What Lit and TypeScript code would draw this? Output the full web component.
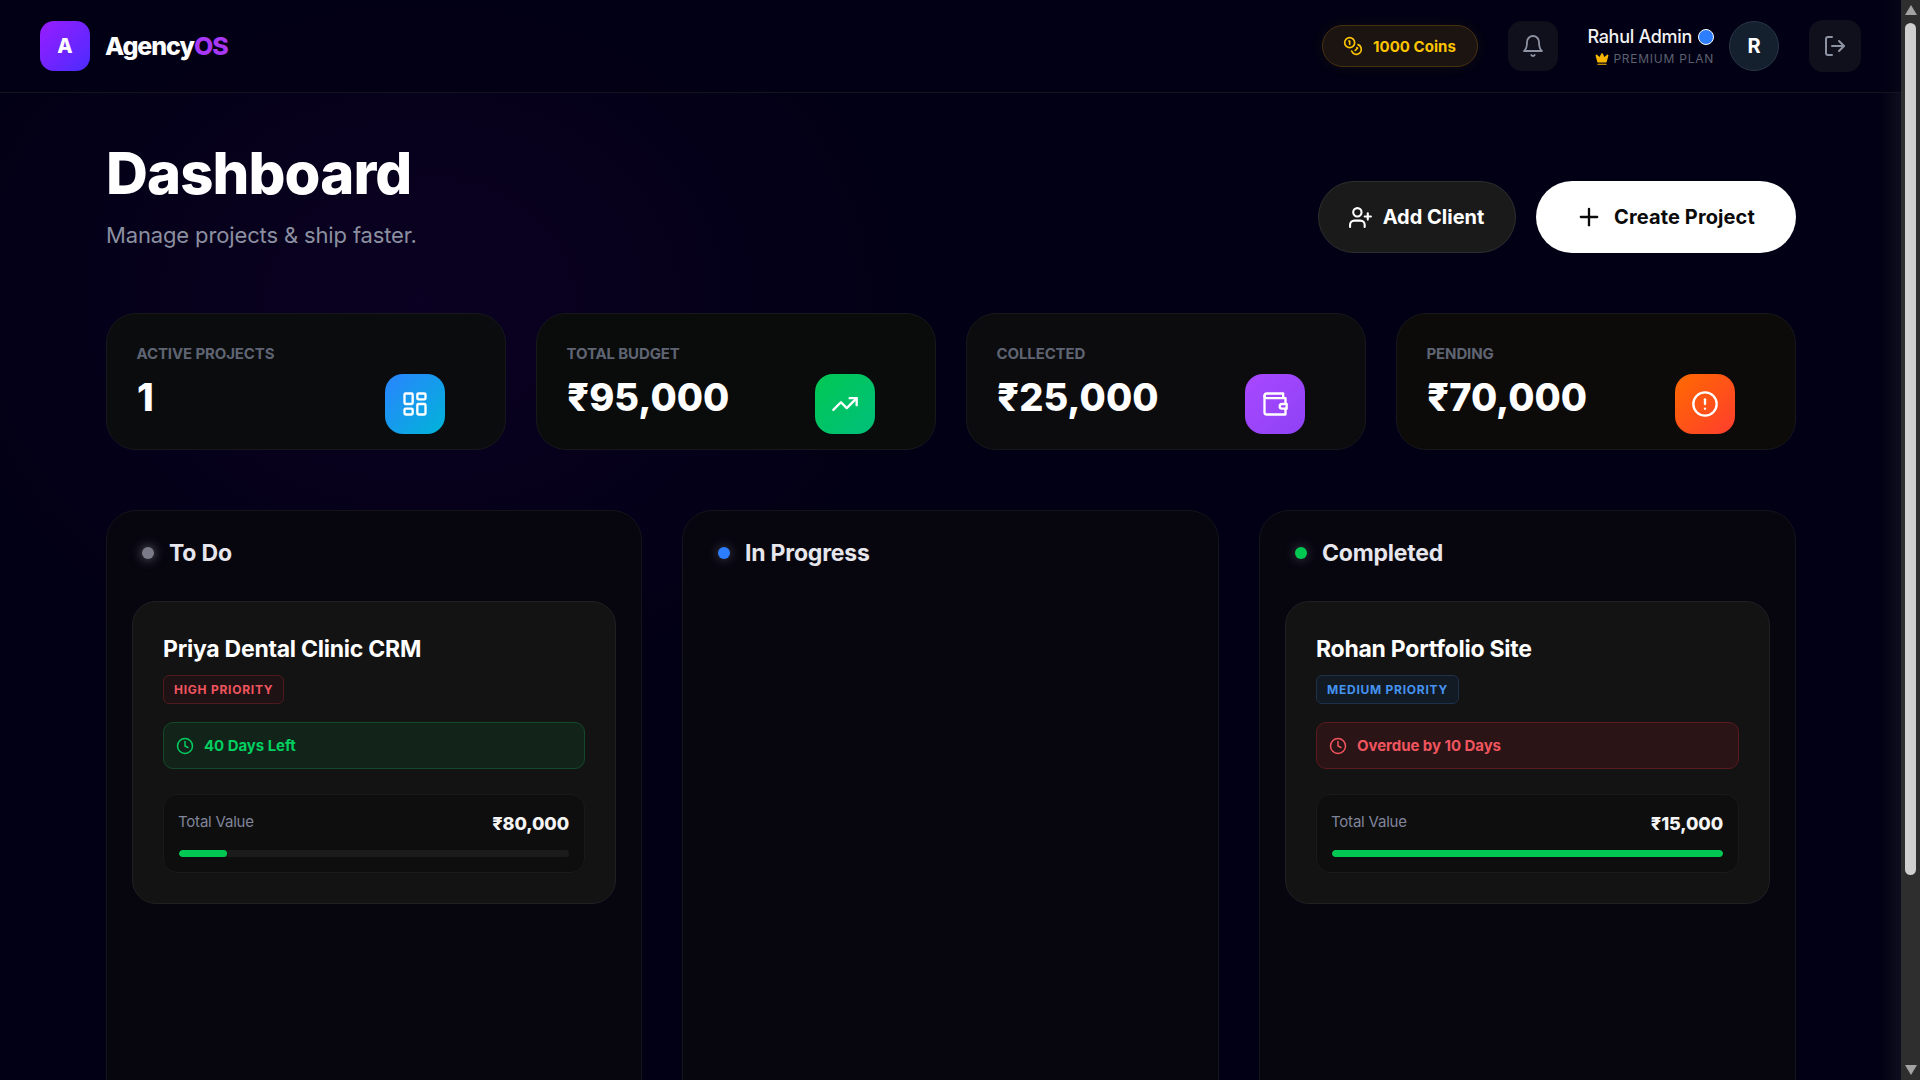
import { LitElement, html, css, svg } from "lit";
import { customElement } from "lit/decorators.js";

const ic = (body: unknown, size = 24, sw = 2) => html`<svg width=${size} height=${size} viewBox="0 0 24 24" fill="none" stroke="currentColor" stroke-width=${sw} stroke-linecap="round" stroke-linejoin="round">${body}</svg>`;
const coins = svg`<circle cx="8" cy="8" r="6"/><path d="M18.09 10.37A6 6 0 1 1 10.34 18"/><path d="M7 6h1v4"/><path d="m16.71 13.88.7.71-2.82 2.82"/>`;
const bell = svg`<path d="M6 8a6 6 0 0 1 12 0c0 7 3 9 3 9H3s3-2 3-9"/><path d="M10.3 21a1.94 1.94 0 0 0 3.4 0"/>`;
const logout = svg`<path d="M9 21H5a2 2 0 0 1-2-2V5a2 2 0 0 1 2-2h4"/><polyline points="16 17 21 12 16 7"/><line x1="21" y1="12" x2="9" y2="12"/>`;
const userPlus = svg`<path d="M16 21v-2a4 4 0 0 0-4-4H6a4 4 0 0 0-4 4v2"/><circle cx="9" cy="7" r="4"/><line x1="19" y1="8" x2="19" y2="14"/><line x1="22" y1="11" x2="16" y2="11"/>`;
const plus = svg`<path d="M5 12h14"/><path d="M12 5v14"/>`;
const dash = svg`<rect x="3" y="3" width="7" height="9" rx="1"/><rect x="14" y="3" width="7" height="5" rx="1"/><rect x="14" y="12" width="7" height="9" rx="1"/><rect x="3" y="16" width="7" height="5" rx="1"/>`;
const trend = svg`<polyline points="22 7 13.5 15.5 8.5 10.5 2 17"/><polyline points="16 7 22 7 22 13"/>`;
const wallet = svg`<path d="M21 12V7H5a2 2 0 0 1 0-4h14v4"/><path d="M3 5v14a2 2 0 0 0 2 2h16v-5"/><path d="M18 12a2 2 0 0 0 0 4h4v-4Z"/>`;
const alert = svg`<circle cx="12" cy="12" r="10"/><line x1="12" y1="8" x2="12" y2="12"/><line x1="12" y1="16" x2="12.01" y2="16"/>`;
const clock = svg`<circle cx="12" cy="12" r="10"/><polyline points="12 6 12 12 16 14"/>`;

const stats = [
  { l: "ACTIVE PROJECTS", v: "1", c: "blue", i: dash, bg: "s1" },
  { l: "TOTAL BUDGET", v: "₹95,000", c: "green", i: trend, bg: "s2" },
  { l: "COLLECTED", v: "₹25,000", c: "purple", i: wallet, bg: "s3" },
  { l: "PENDING", v: "₹70,000", c: "orange", i: alert, bg: "s4" },
];

type P = { t: string; pr: string; prc: string; d: string; dc: string; val: string; pct: number };
const cols: { n: string; dot: string; items: P[] }[] = [
  { n: "To Do", dot: "gray", items: [{ t: "Priya Dental Clinic CRM", pr: "HIGH PRIORITY", prc: "high", d: "40 Days Left", dc: "ok", val: "₹80,000", pct: 12.4 }] },
  { n: "In Progress", dot: "blue", items: [] },
  { n: "Completed", dot: "green", items: [{ t: "Rohan Portfolio Site", pr: "MEDIUM PRIORITY", prc: "med", d: "Overdue by 10 Days", dc: "late", val: "₹15,000", pct: 100 }] },
];

@customElement("app-root")
export class AppRoot extends LitElement {
  static styles = css`
    :host { display: block; height: 1080px; overflow: hidden; font-family: Inter, "Liberation Sans", sans-serif; color: #fff; }
    .page { display: flex; height: 1080px; }
    .main { position: relative; width: 1901px; height: 1080px; overflow: hidden; background:
      radial-gradient(ellipse 520px 420px at 420px 300px, rgba(70,10,130,.13), transparent 100%),
      linear-gradient(90deg, transparent 1880px, rgba(30,30,40,.45) 1901px), #020014; }
    .sb { width: 19px; height: 1080px; background: #2e2e2e; position: relative; display: flex; flex-direction: column; align-items: center; justify-content: space-between; padding: 5px 0; box-sizing: border-box; }
    .sb .thumb { position: absolute; left: 4px; top: 23px; width: 11px; height: 852px; background: #cfcfcf; border-radius: 6px; }
    .arr { width: 0; height: 0; border-left: 6px solid transparent; border-right: 6px solid transparent; }
    .arr.up { border-bottom: 10px solid #a3a3a3; }
    .arr.down { border-top: 10px solid #a3a3a3; }

    header { height: 92px; border-bottom: 1px solid #14141f; display: flex; align-items: center; padding: 0 40px; background: rgba(2,0,20,.6); }
    .logo { width: 50px; height: 50px; border-radius: 14px; background: linear-gradient(135deg,#9a1cff,#4a2cff); display: flex; align-items: center; justify-content: center; font-weight: 800; font-size: 20px; }
    .brand { margin-left: 15px; font-size: 25px; font-weight: 800; letter-spacing: -1.05px; }
    .brand span { color: #a838f5; }
    .sp { flex: 1; }
    .coin { height: 42px; width: 156px; box-sizing: border-box; border-radius: 21px; background: #1b1410; border: 1px solid #47320f; box-shadow: 0 0 14px rgba(255,190,0,.07); color: #fdc400; display: flex; align-items: center; gap: 10px; padding-left: 20px; font-size: 15px; font-weight: 700; letter-spacing: 0.05px; }
    .ibtn { width: 50px; height: 50px; border-radius: 14px; background: #10101d; color: #8e93a3; display: flex; align-items: center; justify-content: center; margin-left: 30px; }
    .user { margin-left: 30px; width: 126px; margin-right: 15px; display: flex; flex-direction: column; align-items: flex-end; }
    .uname { display: flex; align-items: center; gap: 6px; font-size: 18px; font-weight: 500; letter-spacing: -0.3px; height: 24px; color: #f2f2f2; white-space: nowrap; margin-top: 1px; }
    .vdot { width: 16px; height: 16px; box-sizing: border-box; border-radius: 50%; background: #2d7dff; border: 1px solid #fff; }
    .plan { display: flex; align-items: center; gap: 4px; font-size: 12px; color: #5c6070; letter-spacing: .75px; height: 20px; margin-top: 0; white-space: nowrap; }
    .plan svg { color: #f9b500; }
    .avatar { width: 50px; height: 50px; border-radius: 50%; box-sizing: border-box; background: #14202e; border: 1px solid #2a3644; display: flex; align-items: center; justify-content: center; font-size: 20px; font-weight: 700; }
    .logout { width: 52px; height: 52px; border-radius: 14px; background: #10101d; color: #8e93a3; display: flex; align-items: center; justify-content: center; margin-left: 30px; }

    .content { padding: 0 105px 0 106px; }
    .top { height: 220px; display: flex; justify-content: space-between; }
    h1 { margin: 45px 0 0 0; font-size: 58px; line-height: 70px; font-weight: 800; letter-spacing: -0.9px; }
    .sub { font-size: 22px; color: #8b90a0; margin-top: 13px; line-height: 28px; letter-spacing: -0.14px; }
    .actions { display: flex; gap: 20px; padding-top: 88px; }
    .btn { height: 72px; border-radius: 36px; box-sizing: border-box; display: flex; align-items: center; justify-content: center; font-size: 20px; font-weight: 700; letter-spacing: 0; }
    .b1 { width: 198px; gap: 10px; background: #1a1a1a; border: 1px solid #2e2e2e; padding-right: 2px; }
    .b2 { width: 260px; gap: 11px; background: #fff; color: #0a0a0a; letter-spacing: .12px; padding-bottom: 1px; padding-right: 2px; }

    .stats { display: grid; grid-template-columns: repeat(4, 1fr); gap: 30px; }
    .stat { height: 137px; box-sizing: border-box; border: 1px solid #17171c; border-radius: 30px; padding: 30px 60px 14px 30px; display: flex; justify-content: space-between; }
    .s1 { background: #0a0c0e; } .s2 { background: #0a0c0c; } .s3 { background: #0c0c0f; } .s4 { background: #0d0b0a; }
    .lab { font-size: 15px; font-weight: 700; color: #5f6473; line-height: 20px; letter-spacing: -0.12px; margin: 0 0 0 -0.5px; }
    .val { font-size: 38px; font-weight: 800; line-height: 46px; margin-top: 10px; letter-spacing: 0; }
    .sic { width: 60px; height: 60px; border-radius: 18px; display: flex; align-items: center; justify-content: center; margin-top: 30px; }
    .blue { background: linear-gradient(135deg,#2a84ff,#00b4d8); }
    .green { background: linear-gradient(135deg,#00c853,#00bf7a); }
    .purple { background: linear-gradient(135deg,#a848ff,#8f42f5); }
    .orange { background: linear-gradient(135deg,#ff6a00,#ff3d2e); }

    .cols { display: grid; grid-template-columns: 536px 537px 537px; gap: 40px; margin-top: 60px; }
    .col { height: 720px; box-sizing: border-box; border: 1px solid #14141c; border-radius: 30px; background: #07060f; padding: 24px 25px; }
    .ch { display: flex; align-items: center; gap: 15px; height: 36px; margin: 0 0 30px 10px; font-size: 23px; font-weight: 700; letter-spacing: -0.2px; color: #e6e6ec; line-height: 36px; }
    .dot { width: 12px; height: 12px; border-radius: 50%; margin-left: 0; }
    .dot.gray { background: #7a7a88; box-shadow: 0 0 12px rgba(200,200,220,.55); }
    .dot.blue { background: #2d7dff; box-shadow: 0 0 12px rgba(200,200,220,.35); }
    .dot.green { background: #00c853; box-shadow: 0 0 12px rgba(200,200,220,.35); }
    .card { box-sizing: border-box; height: 303px; border: 1px solid #202024; background: #131313; border-radius: 24px; padding: 29px 30px; }
    .ct { font-size: 23px; font-weight: 700; line-height: 36px; letter-spacing: -0.25px; }
    .badge { display: inline-flex; align-items: center; height: 29px; box-sizing: border-box; padding: 0 10px; margin-top: 8px; border-radius: 6px; font-size: 12px; font-weight: 700; letter-spacing: .75px; }
    .high { color: #f0555f; background: #1f1214; border: 1px solid #4f1a1f; }
    .med { color: #4593ef; background: #121a24; border: 1px solid #1e304a; }
    .dl { height: 47px; box-sizing: border-box; border-radius: 10px; margin-top: 18px; display: flex; align-items: center; gap: 10px; padding-left: 12px; font-size: 15px; font-weight: 700; letter-spacing: -0.05px; }
    .ok { background: #12231a; border: 1px solid #144a2a; color: #00cf60; }
    .late { background: #2b1415; border: 1px solid #5a1a1f; color: #f0555f; }
    .vb { height: 79px; box-sizing: border-box; margin-top: 25px; border-radius: 14px; border: 1px solid #1a1a1c; background: #0e0e0e; padding: 14px 15px 0; }
    .vr { display: flex; justify-content: space-between; align-items: center; height: 28px; }
    .vl { font-size: 15px; color: #80859a; letter-spacing: -0.2px; margin: -3px 0 0 -1px; }
    .vv { font-size: 18px; font-weight: 800; letter-spacing: -0.1px; color: #f4f4f4; }
    .bar { height: 7px; border-radius: 4px; background: #1b1b1b; margin-top: 13px; overflow: hidden; }
    .fill { height: 100%; border-radius: 4px; background: #00c853; }
    .ck { display: flex; }
  `;

  render() {
    return html`<div class="page">
      <div class="main">
        <header>
          <div class="logo">A</div>
          <div class="brand">Agency<span>OS</span></div>
          <div class="sp"></div>
          <div class="coin">${ic(coins, 20, 2)}<span>1000 Coins</span></div>
          <div class="ibtn">${ic(bell, 24, 1.8)}</div>
          <div class="user">
            <div class="uname">Rahul Admin <span class="vdot"></span></div>
            <div class="plan"><svg width="14" height="14" viewBox="0 0 24 24" fill="currentColor" stroke="currentColor" stroke-width="2" stroke-linecap="round" stroke-linejoin="round"><path d="M11.562 3.266a.5.5 0 0 1 .876 0L15.39 8.87a1 1 0 0 0 1.516.294L21.183 5.5a.5.5 0 0 1 .798.519l-2.834 10.246a1 1 0 0 1-.956.734H5.81a1 1 0 0 1-.957-.734L2.02 6.02a.5.5 0 0 1 .798-.519l4.276 3.664a1 1 0 0 0 1.516-.294z"/><path d="M5 21h14"/></svg>PREMIUM PLAN</div>
          </div>
          <div class="avatar">R</div>
          <div class="logout">${ic(logout, 24, 2)}</div>
        </header>
        <div class="content">
          <div class="top">
            <div>
              <h1>Dashboard</h1>
              <div class="sub">Manage projects &amp; ship faster.</div>
            </div>
            <div class="actions">
              <div class="btn b1">${ic(userPlus, 25, 2)}<span>Add Client</span></div>
              <div class="btn b2">${ic(plus, 28, 2)}<span>Create Project</span></div>
            </div>
          </div>
          <div class="stats">
            ${stats.map((s) => html`<div class="stat ${s.bg}">
              <div><div class="lab">${s.l}</div><div class="val">${s.v}</div></div>
              <div class="sic ${s.c}">${ic(s.i, 28, 2)}</div>
            </div>`)}
          </div>
          <div class="cols">
            ${cols.map((c) => html`<div class="col">
              <div class="ch"><span class="dot ${c.dot}"></span>${c.n}</div>
              ${c.items.map((p) => html`<div class="card">
                <div class="ct">${p.t}</div>
                <div class="badge ${p.prc}">${p.pr}</div>
                <div class="dl ${p.dc}"><span class="ck">${ic(clock, 18, 2)}</span>${p.d}</div>
                <div class="vb">
                  <div class="vr"><span class="vl">Total Value</span><span class="vv">${p.val}</span></div>
                  <div class="bar"><div class="fill" style="width:${p.pct}%"></div></div>
                </div>
              </div>`)}
            </div>`)}
          </div>
        </div>
      </div>
      <div class="sb"><div class="arr up"></div><div class="thumb"></div><div class="arr down"></div></div>
    </div>`;
  }
}
